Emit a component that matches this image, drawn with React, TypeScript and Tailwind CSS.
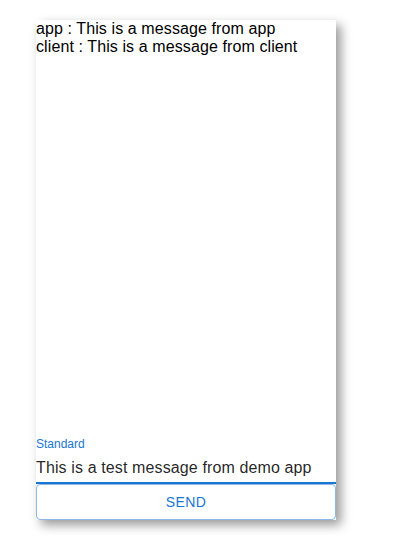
import React from "react";

export default function App() {
  return (
    <div className="w-[412px] h-[552px] bg-white pt-5 pl-9" style={{ fontFamily: '"Liberation Sans", Arial, sans-serif' }}>
      <div className="w-[300px] h-[500px] bg-white flex flex-col shadow-[5px_5px_10px_rgba(0,0,0,0.4)]">
        <div className="flex-1 text-[16px] leading-[18px] tracking-[0.1px] text-black">
          <div>app : This is a message from app</div>
          <div>client : This is a message from client</div>
        </div>
        <div className="relative h-12">
          <div className="absolute left-0 top-0 text-[12px] leading-[17px] text-[#1976d2]">Standard</div>
          <div className="pt-4">
            <div className="pt-1 pb-[5px] h-[32px] box-border text-[16px] leading-[23px] tracking-[0.12px] text-[rgba(0,0,0,0.87)]">
              This is a test message from demo app
            </div>
          </div>
          <div className="absolute left-0 right-0 bottom-0 h-[2px] bg-[#1976d2]"></div>
        </div>
        <button className="h-9 w-full border border-[rgba(25,118,210,0.5)] rounded text-[14px] font-medium tracking-[0.4px] text-[#1976d2] uppercase">
          Send
        </button>
      </div>
    </div>
  );
}
